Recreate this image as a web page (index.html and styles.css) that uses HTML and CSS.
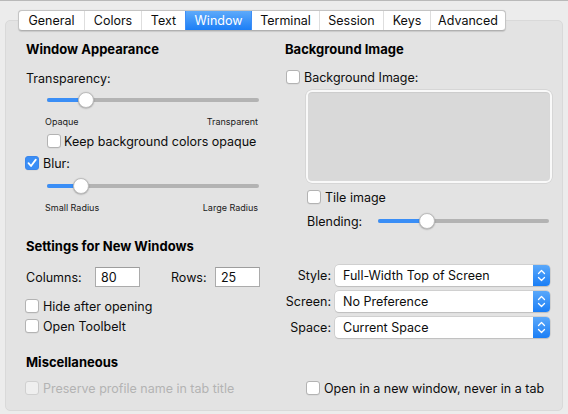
FILE: index.html
```html
<!DOCTYPE html>
<html>
<head>
<meta charset="utf-8">
<link rel="stylesheet" href="styles.css">
</head>
<body>
<div class="topline"></div>
<div class="window">
  <div class="tabs">
    <div class="tab tab-general">General</div>
    <div class="tab tab-colors">Colors</div>
    <div class="tab tab-text">Text</div>
    <div class="tab tab-window selected">Window</div>
    <div class="tab tab-terminal">Terminal</div>
    <div class="tab tab-session">Session</div>
    <div class="tab tab-keys">Keys</div>
    <div class="tab tab-advanced">Advanced</div>
  </div>
  <div class="panel">
    <div class="col col-left">
      <h2 class="heading">Window Appearance</h2>
      <div class="label-row gap-label">Transparency:</div>
      <div class="slider slider-wide gap-slider">
        <div class="track"></div>
        <div class="fill" style="width:39px"></div>
        <div class="knob" style="left:39px"></div>
      </div>
      <div class="scale-labels gap-scale"><span>Opaque</span><span>Transparent</span></div>
      <label class="check check-indent gap-check"><span class="box"></span>Keep background colors opaque</label>
      <label class="check check-out gap-check"><span class="box checked"><svg viewBox="0 0 14 14" width="14" height="14"><path d="M3.5 7.2 L6 10 L10.8 3.6" fill="none" stroke="#fff" stroke-width="1.8" stroke-linecap="round" stroke-linejoin="round"/></svg></span>Blur:</label>
      <div class="slider slider-wide gap-slider2">
        <div class="track"></div>
        <div class="fill" style="width:34px"></div>
        <div class="knob" style="left:34px"></div>
      </div>
      <div class="scale-labels gap-scale"><span>Small Radius</span><span>Large Radius</span></div>

      <h2 class="heading gap-section">Settings for New Windows</h2>
      <div class="size-row gap-size">
        <span class="size-label">Columns:</span>
        <span class="field">80</span>
        <span class="size-label rows-label">Rows:</span>
        <span class="field">25</span>
      </div>
      <label class="check check-out gap-hide"><span class="box"></span>Hide after opening</label>
      <label class="check check-out gap-tight"><span class="box"></span>Open Toolbelt</label>

      <h2 class="heading gap-misc">Miscellaneous</h2>
      <label class="check check-out disabled gap-last"><span class="box"></span>Preserve profile name in tab title</label>
    </div>

    <div class="col col-right">
      <h2 class="heading">Background Image</h2>
      <label class="check check-bg gap-bgcheck"><span class="box"></span>Background Image:</label>
      <div class="image-well"></div>
      <label class="check well-indent gap-check"><span class="box"></span>Tile image</label>
      <div class="blend-row">
        <span class="blend-label">Blending:</span>
        <div class="slider slider-blend">
          <div class="track"></div>
          <div class="fill" style="width:49px"></div>
          <div class="knob" style="left:49px"></div>
        </div>
      </div>

      <div class="popup-row gap-style">
        <span class="popup-label">Style:</span>
        <div class="popup"><span class="popup-text">Full-Width Top of Screen</span><span class="stepper"><svg viewBox="0 0 17 21" width="17" height="21"><path d="M5.5 8.5 L8.5 5.5 L11.5 8.5 M5.5 12.5 L8.5 15.5 L11.5 12.5" fill="none" stroke="#fff" stroke-width="1.3" stroke-linecap="round" stroke-linejoin="round"/></svg></span></div>
      </div>
      <div class="popup-row gap-popup">
        <span class="popup-label">Screen:</span>
        <div class="popup"><span class="popup-text">No Preference</span><span class="stepper"><svg viewBox="0 0 17 21" width="17" height="21"><path d="M5.5 8.5 L8.5 5.5 L11.5 8.5 M5.5 12.5 L8.5 15.5 L11.5 12.5" fill="none" stroke="#fff" stroke-width="1.3" stroke-linecap="round" stroke-linejoin="round"/></svg></span></div>
      </div>
      <div class="popup-row gap-popup">
        <span class="popup-label">Space:</span>
        <div class="popup"><span class="popup-text">Current Space</span><span class="stepper"><svg viewBox="0 0 17 21" width="17" height="21"><path d="M5.5 8.5 L8.5 5.5 L11.5 8.5 M5.5 12.5 L8.5 15.5 L11.5 12.5" fill="none" stroke="#fff" stroke-width="1.3" stroke-linecap="round" stroke-linejoin="round"/></svg></span></div>
      </div>

      <label class="check well-indent-b gap-open"><span class="box"></span>Open in a new window, never in a tab</label>
    </div>
  </div>
</div>
</body>
</html>
```

FILE: styles.css
```css
* { box-sizing: border-box; }
html, body {
  margin: 0;
  padding: 0;
  background: #ececec;
  font-family: "Inter", "Liberation Sans", sans-serif;
  font-size: 12.5px;
  color: #0d0d0d;
  width: 568px;
  height: 414px;
  overflow: hidden;
  white-space: nowrap;
}
.topline { height: 1px; background: #b9b9b9; }
.window { padding-top: 9px; }

.tabs {
  position: relative;
  z-index: 2;
  display: flex;
  margin-left: 18px;
  width: 488px;
  height: 21px;
  background: #fff;
  border: 1px solid #c4c4c4;
  border-bottom-color: #b0b0b0;
  border-radius: 4px;
  box-shadow: 0 0.5px 1px rgba(0,0,0,0.12);
  overflow: hidden;
}
.tab {
  display: flex;
  align-items: center;
  justify-content: center;
  height: 100%;
  border-left: 1px solid #dedede;
  color: #0d0d0d;
  font-size: 12.5px;
}
.tab:first-child { border-left: none; }
.tab-general { width: 65px; }
.tab-colors { width: 57px; }
.tab-text { width: 44px; }
.tab-window { width: 66px; }
.tab-terminal { width: 68px; }
.tab-session { width: 64px; }
.tab-keys { width: 47px; }
.tab-advanced { flex: 1; }
.tab.selected {
  background: linear-gradient(#5eaafa, #1b7ef6);
  color: #fff;
  border-left-color: #3d8ef7;
}
.tab.selected + .tab { border-left-color: #3d8ef7; }

.panel {
  margin: -11px 5px 0 5px;
  height: 391px;
  background: #e3e3e3;
  border: 1px solid #d9d9d9;
  border-radius: 5px;
  padding: 19px 0 0 20px;
  display: flex;
  gap: 25px;
}
.col { display: flex; flex-direction: column; }
.col-left { width: 234px; }
.col-right { width: 267px; }

.heading {
  margin: 0;
  height: 18px;
  display: flex;
  align-items: center;
  font-size: 13px;
  font-weight: 700;
  color: #000;
}
.label-row { height: 18px; display: flex; align-items: center; }

.slider { position: relative; height: 16px; }
.slider .track {
  position: absolute; left: 0; right: 0; top: 6px;
  height: 4px; border-radius: 2px; background: #b3b3b3;
}
.slider .fill {
  position: absolute; left: 0; top: 6px;
  height: 4px; border-radius: 2px; background: #3a8ef6;
}
.slider .knob {
  position: absolute; top: 0;
  width: 16px; height: 16px; margin-left: -8px;
  border-radius: 50%;
  background: #fff;
  border: 0.5px solid #bdbdbd;
  box-shadow: 0 0.5px 1.5px rgba(0,0,0,0.3);
}
.slider-wide { margin-left: 21px; width: 212px; }
.slider-blend { width: 171px; }

.scale-labels {
  height: 12px;
  margin-left: 19px;
  width: 213px;
  display: flex;
  justify-content: space-between;
  align-items: center;
  font-size: 9px;
  color: #1a1a1a;
}

.check {
  height: 16px;
  display: flex;
  align-items: center;
  gap: 4px;
  color: #0d0d0d;
}
.check .box {
  flex: none;
  width: 14px; height: 14px;
  background: #fff;
  border: 1px solid #b3b3b3;
  border-radius: 3px;
  box-shadow: 0 0.5px 0.5px rgba(0,0,0,0.08);
}
.check .box.checked {
  background: #3a8ef6;
  border-color: #3a86ec;
  display: flex;
}
.check .box.checked svg { margin: -1px; }
.check.disabled { color: #b3b3b3; }
.check.disabled .box { background: #efefef; border-color: #d0d0d0; box-shadow: none; }
.check-indent { margin-left: 21px; gap: 3px; }
.check-out { margin-left: -1px; }
.check-bg { margin-left: 1px; }
.well-indent { margin-left: 22px; }
.well-indent-b { margin-left: 21px; }

.gap-label { margin-top: 11px; }
.gap-slider { margin-top: 5px; }
.gap-slider2 { margin-top: 7px; }
.gap-scale { margin-top: 7px; }
.gap-check { margin-top: 6px; }
.gap-section { margin-top: 24px; }
.gap-size { margin-top: 12px; }
.gap-hide { margin-top: 11px; }
.gap-tight { margin-top: 4px; }
.gap-misc { margin-top: 19px; }
.gap-last { margin-top: 9px; }
.gap-bgcheck { margin-top: 11px; }
.gap-style { margin-top: 36px; }
.gap-popup { margin-top: 5px; }
.gap-open { margin-top: 42px; }

.size-row { height: 20px; display: flex; align-items: center; }
.size-label { width: 69px; }
.rows-label { width: 44px; margin-left: 31px; }
.field {
  width: 45px; height: 20px;
  background: #fff;
  border: 1px solid #ababab;
  border-top-color: #9d9d9d;
  padding-left: 5px;
  display: flex; align-items: center;
}

.image-well {
  margin-top: 5px;
  margin-left: 21px;
  width: 246px;
  height: 93px;
  background: #d9d9d9;
  border: 2px solid #f9f9f9;
  border-radius: 6px;
  box-shadow: 0 0 0 0.5px #c9c9c9, inset 0 1px 1px rgba(0,0,0,0.06);
}

.blend-row {
  margin-top: 8px;
  margin-left: 22px;
  height: 16px;
  display: flex;
  align-items: center;
}
.blend-label { width: 71px; }

.popup-row { height: 21px; display: flex; align-items: center; }
.popup-label { width: 46px; text-align: right; }
.popup {
  margin-left: 4px;
  width: 215px;
  height: 21px;
  display: flex;
  background: #fff;
  border-radius: 4px;
  box-shadow: 0 0 0 0.5px #bdbdbd, 0 1px 1px rgba(0,0,0,0.15);
  overflow: hidden;
}
.popup-text { flex: 1; padding-left: 8px; display: flex; align-items: center; }
.stepper {
  width: 17px;
  background: linear-gradient(#5aa8fa, #1a7ef6);
  display: flex;
}
```
